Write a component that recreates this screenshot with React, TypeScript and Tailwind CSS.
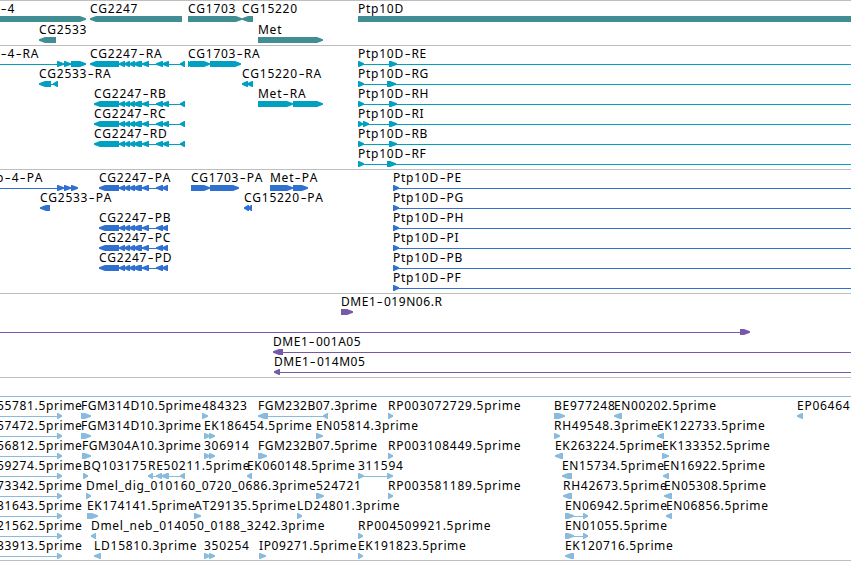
import { Fragment } from 'react';
import clsx from 'clsx';

type Label = [x: number, text: string];
// dir: 1 points right, -1 points left, 0 is a plain box
type Exon = [from: number, to: number, dir: number];
type Line = [from: number, to: number];

interface Row {
  labels: Label[];
  exons: Exon[];
  lines?: Line[];
}

const END = 851;

const cg2247: Exon[] = [
  [119, 125, -1],
  [124, 130, -1],
  [129, 135, -1],
  [133, 142, -1],
  [142, 149, -1],
  [156, 163, -1],
];

const cg2247Transcript = (from: number): Exon[] => [
  [from, 119, -1],
  ...cg2247,
  [162, 169, -1],
  [180, 185, -1],
];

const cg2247Protein: Exon[] = [[99, 119, -1], ...cg2247, [162, 168, -1]];

const genes: Row[] = [
  {
    labels: [[0, '-4'], [90, 'CG2247'], [188, 'CG1703'], [242, 'CG15220'], [358, 'Ptp10D']],
    exons: [[-5, 86, 1], [90, 182, -1], [188, 242, 1], [242, 253, -1], [358, END, 0]],
  },
  {
    labels: [[39, 'CG2533'], [258, 'Met']],
    exons: [[39, 56, -1], [258, 323, 1]],
  },
];

const transcripts: Row[] = [
  {
    labels: [[0, '-4-RA'], [90, 'CG2247-RA'], [188, 'CG1703-RA'], [358, 'Ptp10D-RE']],
    exons: [
      [57, 64, 1], [64, 71, 1], [71, 86, 1],
      ...cg2247Transcript(90),
      [188, 191, 1], [190, 210, 1], [210, 241, 1],
      [358, 364, 1], [389, 397, 1],
    ],
    lines: [[0, 71], [119, 185], [358, END]],
  },
  {
    labels: [[39, 'CG2533-RA'], [242, 'CG15220-RA'], [358, 'Ptp10D-RG']],
    exons: [[39, 51, -1], [53, 58, -1], [242, 248, -1], [247, 253, -1], [358, 364, 1], [387, 396, 1]],
    lines: [[51, 58], [358, END]],
  },
  {
    labels: [[94, 'CG2247-RB'], [258, 'Met-RA'], [358, 'Ptp10D-RH']],
    exons: [...cg2247Transcript(94), [258, 293, 1], [293, 323, 1], [358, 364, 1], [389, 397, 1]],
    lines: [[119, 185], [358, END]],
  },
  {
    labels: [[94, 'CG2247-RC'], [358, 'Ptp10D-RI']],
    exons: [...cg2247Transcript(94), [358, 363, 1], [363, 369, 1], [389, 397, 1]],
    lines: [[119, 185], [358, END]],
  },
  {
    labels: [[94, 'CG2247-RD'], [358, 'Ptp10D-RB']],
    exons: [...cg2247Transcript(94), [358, 364, 1], [389, 397, 1]],
    lines: [[119, 185], [358, END]],
  },
  {
    labels: [[358, 'Ptp10D-RF']],
    exons: [[358, 364, 1], [387, 396, 1]],
    lines: [[358, END]],
  },
];

const proteins: Row[] = [
  {
    labels: [[-4, 'p-4-PA'], [99, 'CG2247-PA'], [191, 'CG1703-PA'], [270, 'Met-PA'], [393, 'Ptp10D-PE']],
    exons: [
      [57, 64, 1], [64, 71, 1], [71, 78, 1],
      ...cg2247Protein,
      [191, 210, 1], [210, 239, 1],
      [270, 293, 1], [293, 308, 1],
      [393, 399, 1],
    ],
    lines: [[0, 71], [119, 168], [393, END]],
  },
  {
    labels: [[40, 'CG2533-PA'], [244, 'CG15220-PA'], [393, 'Ptp10D-PG']],
    exons: [[40, 50, -1], [244, 249, -1], [248, 252, -1], [393, 399, 1]],
    lines: [[393, END]],
  },
  {
    labels: [[99, 'CG2247-PB'], [393, 'Ptp10D-PH']],
    exons: [...cg2247Protein, [393, 399, 1]],
    lines: [[119, 168], [393, END]],
  },
  {
    labels: [[99, 'CG2247-PC'], [393, 'Ptp10D-PI']],
    exons: [...cg2247Protein, [393, 399, 1]],
    lines: [[119, 168], [393, END]],
  },
  {
    labels: [[99, 'CG2247-PD'], [393, 'Ptp10D-PB']],
    exons: [...cg2247Protein, [393, 399, 1]],
    lines: [[119, 168], [393, END]],
  },
  {
    labels: [[393, 'Ptp10D-PF']],
    exons: [[393, 399, 1]],
    lines: [[393, END]],
  },
];

const clones: Row[] = [
  { labels: [[341, 'DME1-019N06.R']], exons: [[341, 353, 1]] },
  { labels: [], exons: [[740, 750, 1]], lines: [[0, 740]] },
  { labels: [[273, 'DME1-001A05']], exons: [[273, 283, -1]], lines: [[283, END]] },
  { labels: [[274, 'DME1-014M05']], exons: [[274, 280, -1]], lines: [[280, END]] },
];

const ests: Row[] = [
  {
    labels: [
      [-3, '55781.5prime'], [81, 'FGM314D10.5prime'], [202, '484323'], [258, 'FGM232B07.3prime'],
      [388, 'RP003072729.5prime'], [554, 'BE977248'], [614, 'EN00202.5prime'], [797, 'EP06464'],
    ],
    exons: [
      [57, 62, 1], [81, 91, 1], [202, 208, 1], [258, 268, -1], [323, 328, -1],
      [388, 393, 1], [554, 565, 1], [614, 622, -1], [797, 803, -1],
    ],
    lines: [[0, 57], [268, 328]],
  },
  {
    labels: [
      [-3, '57472.5prime'], [81, 'FGM314D10.3prime'], [204, 'EK186454.5prime'],
      [316, 'EN05814.3prime'], [554, 'RH49548.3prime'], [657, 'EK122733.5prime'],
    ],
    exons: [[57, 62, 1], [81, 91, 1], [204, 210, 1], [209, 215, 1], [316, 323, 1], [554, 560, 1], [657, 664, -1]],
    lines: [[0, 57]],
  },
  {
    labels: [
      [-3, '56812.5prime'], [82, 'FGM304A10.3prime'], [204, '306914'], [258, 'FGM232B07.5prime'],
      [388, 'RP003108449.5prime'], [555, 'EK263224.5prime'], [662, 'EK133352.5prime'],
    ],
    exons: [
      [57, 62, 1], [82, 91, 1], [204, 210, 1], [209, 215, 1], [258, 267, 1],
      [388, 393, 1], [555, 563, -1], [662, 669, 1],
    ],
    lines: [[0, 57]],
  },
  {
    labels: [
      [-3, '59274.5prime'], [83, 'BQ103175'], [148, 'RE50211.5prime'], [247, 'EK060148.5prime'],
      [358, '311594'], [562, 'EN15734.5prime'], [663, 'EN16922.5prime'],
    ],
    exons: [
      [57, 62, 1], [83, 88, 1], [148, 153, -1], [156, 162, -1], [161, 169, -1], [180, 185, -1],
      [247, 252, -1], [358, 364, 1], [387, 393, 1], [562, 572, -1], [663, 669, -1],
    ],
    lines: [[0, 57], [148, 185], [358, 387]],
  },
  {
    labels: [
      [-3, '73342.5prime'], [86, 'Dmel_dig_010160_0720_0686.3prime'], [316, '524721'],
      [388, 'RP003581189.5prime'], [563, 'RH42673.5prime'], [664, 'EN05308.5prime'],
    ],
    exons: [[57, 62, 1], [86, 91, 1], [316, 324, 1], [388, 393, 1], [563, 572, -1], [664, 672, -1]],
    lines: [[0, 57]],
  },
  {
    labels: [
      [-3, '31643.5prime'], [87, 'EK174141.5prime'], [194, 'AT29135.5prime'], [297, 'LD24801.3prime'],
      [565, 'EN06942.5prime'], [666, 'EN06856.5prime'],
    ],
    exons: [[57, 62, 1], [87, 98, 1], [194, 201, 1], [297, 302, 1], [565, 574, 1], [583, 588, 1], [666, 672, -1]],
    lines: [[0, 57], [565, 583]],
  },
  {
    labels: [
      [-3, '21562.5prime'], [91, 'Dmel_neb_014050_0188_3242.3prime'],
      [358, 'RP004509921.5prime'], [565, 'EN01055.5prime'],
    ],
    exons: [[57, 62, 1], [91, 96, -1], [358, 363, 1], [565, 574, 1], [583, 588, 1]],
    lines: [[0, 57], [565, 583]],
  },
  {
    labels: [
      [-3, '33913.5prime'], [94, 'LD15810.3prime'], [204, '350254'], [259, 'IP09271.5prime'],
      [358, 'EK191823.5prime'], [565, 'EK120716.5prime'],
    ],
    exons: [[57, 62, 1], [94, 101, -1], [204, 210, 1], [209, 215, 1], [259, 266, 1], [358, 363, 1], [565, 574, -1]],
    lines: [[0, 57]],
  },
];

function exonPoints([from, to, dir]: Exon) {
  if (dir === 0) return `${from},0 ${to},0 ${to},6 ${from},6`;
  const base = dir > 0 ? from : to;
  const tip = dir > 0 ? to : from;
  // short exons are all arrowhead
  const neck = tip - dir * Math.min(6, to - from - 1);
  return `${base},0 ${neck},0 ${tip},2.2 ${tip},3.8 ${neck},6 ${base},6`;
}

function tracking(text: string) {
  if (text.startsWith('FGM')) return 'tracking-[0.5px]';
  if (text.startsWith('DME')) return 'tracking-[0.55px]';
  if (text.startsWith('Dmel')) return 'tracking-[0.68px]';
  if (/^\d+\.|^E[NK]|^IP/.test(text)) return 'tracking-[0.64px]';
  return 'tracking-[0.74px]';
}

function FeatureLabel({ text }: { text: string }) {
  const parts = text.split('-');
  return (
    <>
      {parts.map((part, i) => (
        <Fragment key={i}>
          {i > 0 && <span className="inline-block w-[7.5px] scale-x-150 text-center tracking-normal">-</span>}
          {part}
        </Fragment>
      ))}
    </>
  );
}

function TrackRow({ row, className }: { row: Row; className: string }) {
  return (
    <div className={clsx('shrink-0', className)}>
      <div className="relative h-3.5 text-black">
        {row.labels.map(([x, text]) => (
          <span key={x} className={clsx('absolute top-0 whitespace-nowrap', tracking(text))} style={{ left: x }}>
            <FeatureLabel text={text} />
          </span>
        ))}
      </div>
      <svg width={END} height="6" viewBox={`0 0 ${END} 6`} className="block fill-current">
        {row.lines?.map(([from, to]) => (
          <rect key={from} x={from} y="3" width={to - from} height="1" />
        ))}
        {row.exons.map((exon) => (
          <polygon key={exon[0]} points={exonPoints(exon)} />
        ))}
      </svg>
    </div>
  );
}

function Track({ rows, className, rowClass = 'h-5' }: { rows: Row[]; className: string; rowClass?: string }) {
  return (
    <section className={clsx('flex flex-col border-t border-t-[#bebebe]', className)}>
      {rows.map((row, i) => (
        <TrackRow key={i} row={row} className={rowClass} />
      ))}
    </section>
  );
}

export default function App() {
  return (
    <main className="flex h-[561px] w-[851px] flex-col overflow-hidden border-b border-b-[#bebebe] bg-white font-['Noto_Sans',sans-serif] text-[12px] leading-[13px] [font-kerning:none]">
      <Track rows={genes} className="py-px text-[#408e94]" rowClass="h-[21px]" />
      <Track rows={transcripts} className="pt-px pb-0.5 text-[#00a0c0]" />
      <Track rows={proteins} className="pt-px pb-0.5 text-[#3070d0]" />
      <Track rows={clones} className="pt-px pb-0.5 text-[#7858a8]" />
      <div className="h-[19px] border-t border-t-[#bebebe]" />
      <Track rows={ests} className="border-t-[#88bbdd]! pt-0.5 pb-px text-[#88bbdd]" />
    </main>
  );
}
